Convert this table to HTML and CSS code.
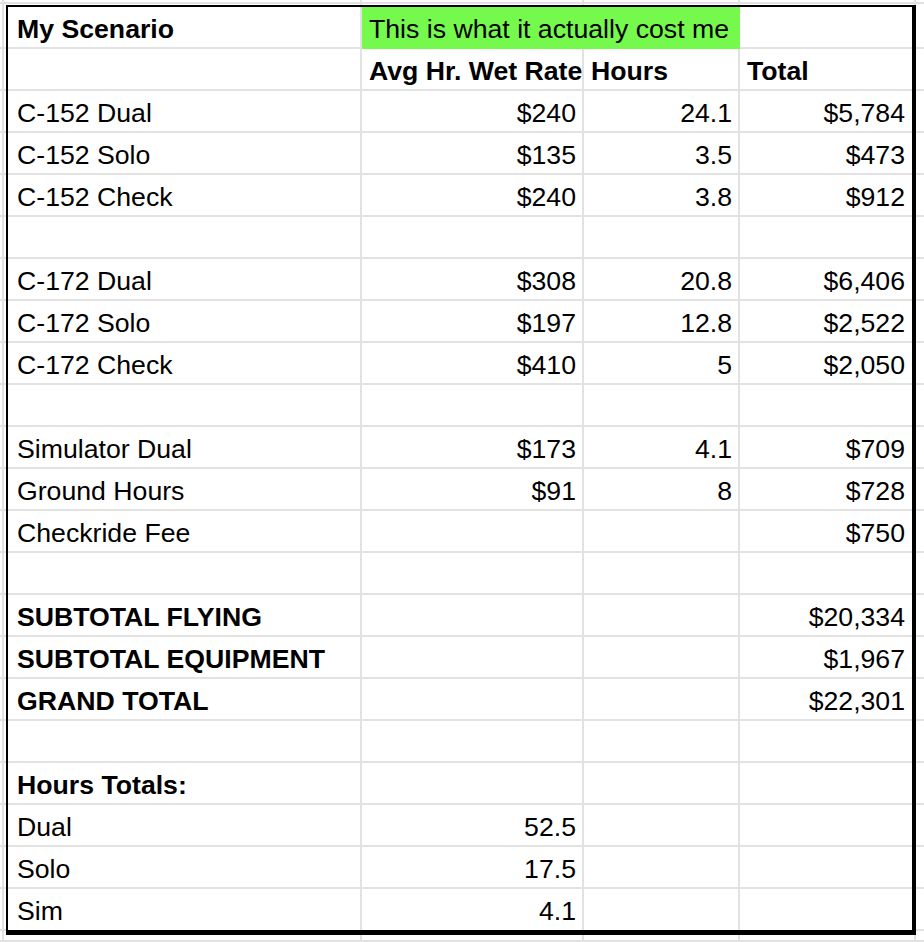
FILE: index.html
```html
<!DOCTYPE html>
<html lang="en">
<head>
<meta charset="utf-8">
<title>My Scenario</title>
<link rel="stylesheet" href="styles.css">
</head>
<body>
<div class="canvas">
  <table class="sheet">
    <colgroup>
      <col class="c-a"><col class="c-b"><col class="c-c"><col class="c-d">
    </colgroup>
    <tbody>
      <tr><td class="b">My Scenario</td><td class="hl" colspan="2">This is what it actually cost me</td><td class="last"></td></tr>
      <tr><td></td><td class="b">Avg Hr. Wet Rate</td><td class="b">Hours</td><td class="b last">Total</td></tr>
      <tr><td>C-152 Dual</td><td class="r">$240</td><td class="r">24.1</td><td class="r last">$5,784</td></tr>
      <tr><td>C-152 Solo</td><td class="r">$135</td><td class="r">3.5</td><td class="r last">$473</td></tr>
      <tr><td>C-152 Check</td><td class="r">$240</td><td class="r">3.8</td><td class="r last">$912</td></tr>
      <tr><td></td><td></td><td></td><td class="last"></td></tr>
      <tr><td>C-172 Dual</td><td class="r">$308</td><td class="r">20.8</td><td class="r last">$6,406</td></tr>
      <tr><td>C-172 Solo</td><td class="r">$197</td><td class="r">12.8</td><td class="r last">$2,522</td></tr>
      <tr><td>C-172 Check</td><td class="r">$410</td><td class="r">5</td><td class="r last">$2,050</td></tr>
      <tr><td></td><td></td><td></td><td class="last"></td></tr>
      <tr><td>Simulator Dual</td><td class="r">$173</td><td class="r">4.1</td><td class="r last">$709</td></tr>
      <tr><td>Ground Hours</td><td class="r">$91</td><td class="r">8</td><td class="r last">$728</td></tr>
      <tr><td>Checkride Fee</td><td></td><td></td><td class="r last">$750</td></tr>
      <tr><td></td><td></td><td></td><td class="last"></td></tr>
      <tr><td class="b">SUBTOTAL FLYING</td><td></td><td></td><td class="r last">$20,334</td></tr>
      <tr><td class="b">SUBTOTAL EQUIPMENT</td><td></td><td></td><td class="r last">$1,967</td></tr>
      <tr><td class="b">GRAND TOTAL</td><td></td><td></td><td class="r last">$22,301</td></tr>
      <tr><td></td><td></td><td></td><td class="last"></td></tr>
      <tr><td class="b">Hours Totals:</td><td></td><td></td><td class="last"></td></tr>
      <tr><td>Dual</td><td class="r">52.5</td><td></td><td class="last"></td></tr>
      <tr><td>Solo</td><td class="r">17.5</td><td></td><td class="last"></td></tr>
      <tr class="final"><td>Sim</td><td class="r">4.1</td><td></td><td class="last"></td></tr>
    </tbody>
  </table>
</div>
</body>
</html>
```

FILE: styles.css
```css
html, body {
  margin: 0;
  padding: 0;
  background: #ffffff;
}

.canvas {
  width: 924px;
  height: 942px;
  box-sizing: border-box;
  padding: 5px 0 0 6px;
  overflow: hidden;
  background-color: #ffffff;
  background-image:
    linear-gradient(#e2e2e2, #e2e2e2),
    linear-gradient(#e2e2e2, #e2e2e2),
    linear-gradient(#e2e2e2, #e2e2e2),
    linear-gradient(#e2e2e2, #e2e2e2),
    linear-gradient(#e2e2e2, #e2e2e2),
    linear-gradient(#e2e2e2, #e2e2e2),
    linear-gradient(#e2e2e2, #e2e2e2),
    repeating-linear-gradient(to bottom, transparent 0, transparent 40px, #e2e2e2 40px, #e2e2e2 42px);
  background-size:
    2px 100%,
    2px 100%,
    2px 100%,
    2px 100%,
    2px 100%,
    100% 2px,
    100% 2px,
    100% 100%;
  background-position:
    2px 0,
    360px 0,
    582px 0,
    738px 0,
    914px 0,
    0 2px,
    0 940px,
    0 7px;
  background-repeat: no-repeat;
}

.sheet {
  border-collapse: separate;
  border-spacing: 0;
  table-layout: fixed;
  width: 910px;
  background: #ffffff;
  border-top: 2px solid #000;
  border-left: 2px solid #000;
  border-right: 4px solid #000;
  border-bottom: 5px solid #000;
  font-family: "Liberation Sans", Arial, Helvetica, sans-serif;
  font-size: 26.67px;
  color: #000;
}

.c-a { width: 354px; }
.c-b { width: 222px; }
.c-c { width: 156px; }
.c-d { width: 172px; }

.sheet td {
  box-sizing: border-box;
  height: 42px;
  padding: 4px 7px 0 7px;
  line-height: 36px;
  white-space: nowrap;
  overflow: visible;
  border-right: 2px solid #e2e2e2;
  border-bottom: 2px solid #e2e2e2;
  vertical-align: top;
  text-align: left;
}

.sheet td:first-child {
  padding-left: 9px;
}

.sheet td.last {
  border-right: none;
}

.sheet td.r {
  text-align: right;
  padding-right: 6px;
}

.sheet td.last.r {
  padding-right: 7px;
}

.sheet td.b {
  font-weight: bold;
}

.sheet td.hl {
  background: #75f94c;
  border-right-color: #75f94c;
  border-bottom-color: #75f94c;
  padding-left: 7px;
}

.sheet tr.final td {
  border-bottom: none;
  height: 41px;
}
```
